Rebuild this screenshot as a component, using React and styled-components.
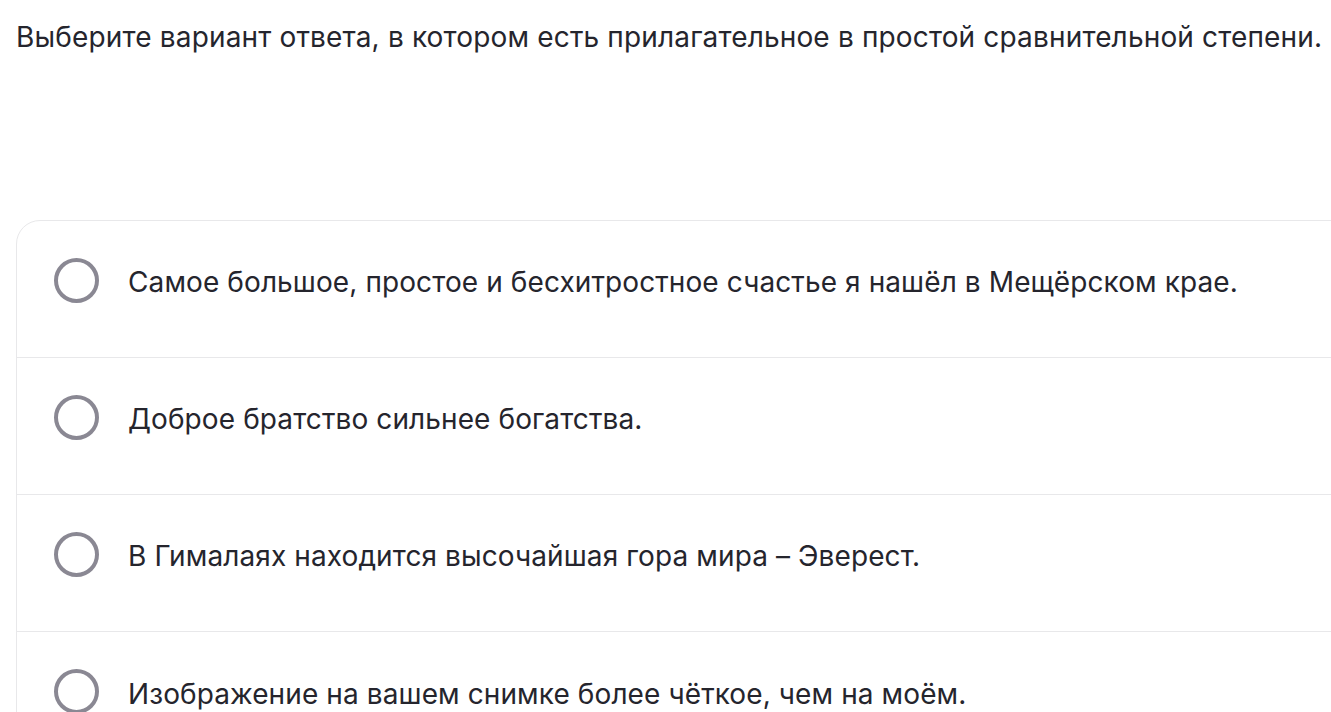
import React, { useState } from "react";
import styled, { createGlobalStyle } from "styled-components";

const GlobalStyle = createGlobalStyle`
  body {
    margin: 0;
    background: #fff;
    overflow: hidden;
    font-family: Inter, "Noto Sans", sans-serif;
    color: #25252d;
  }
`;

const options = [
  "Самое большое, простое и бесхитростное счастье я нашёл в Мещёрском крае.",
  "Доброе братство сильнее богатства.",
  "В Гималаях находится высочайшая гора мира – Эверест.",
  "Изображение на вашем снимке более чёткое, чем на моём.",
];

const App = () => {
  const [selected, setSelected] = useState(null);

  return (
    <Page>
      <GlobalStyle />
      <Question>
        Выберите вариант ответа, в котором есть прилагательное в простой
        сравнительной степени.
      </Question>
      <Card>
        {options.map((text, i) => (
          <Option key={i} onClick={() => setSelected(i)}>
            <Radio checked={selected === i} />
            <OptionText>{text}</OptionText>
          </Option>
        ))}
      </Card>
    </Page>
  );
};

export default App;

const Page = styled.div`
  padding: 17px 16px 0 16px;
  width: 1331px;
  box-sizing: border-box;
`;

const Question = styled.h1`
  margin: 0;
  font-size: 28px;
  line-height: 40px;
  font-weight: 400;
  white-space: nowrap;
  letter-spacing: 0.16px;
`;

const Card = styled.div`
  margin-top: 163px;
  width: 1360px;
  border: 1px solid #e8e8ea;
  border-radius: 24px;
`;

const Option = styled.div`
  display: flex;
  align-items: center;
  gap: 29px;
  height: 137px;
  box-sizing: border-box;
  padding: 0 0 18px 37px;
  border-bottom: 1px solid #e8e8ea;
  cursor: pointer;

  &:last-child {
    border-bottom: none;
  }
`;

const Radio = styled.span`
  flex: none;
  width: 45px;
  height: 45px;
  box-sizing: border-box;
  border-radius: 50%;
  border: 4px solid ${(props) => (props.checked ? "#5b4fe0" : "#8a8893")};
`;

const OptionText = styled.span`
  padding-top: 4px;
  font-size: 28px;
  line-height: 36px;
  letter-spacing: 0.1px;
`;
